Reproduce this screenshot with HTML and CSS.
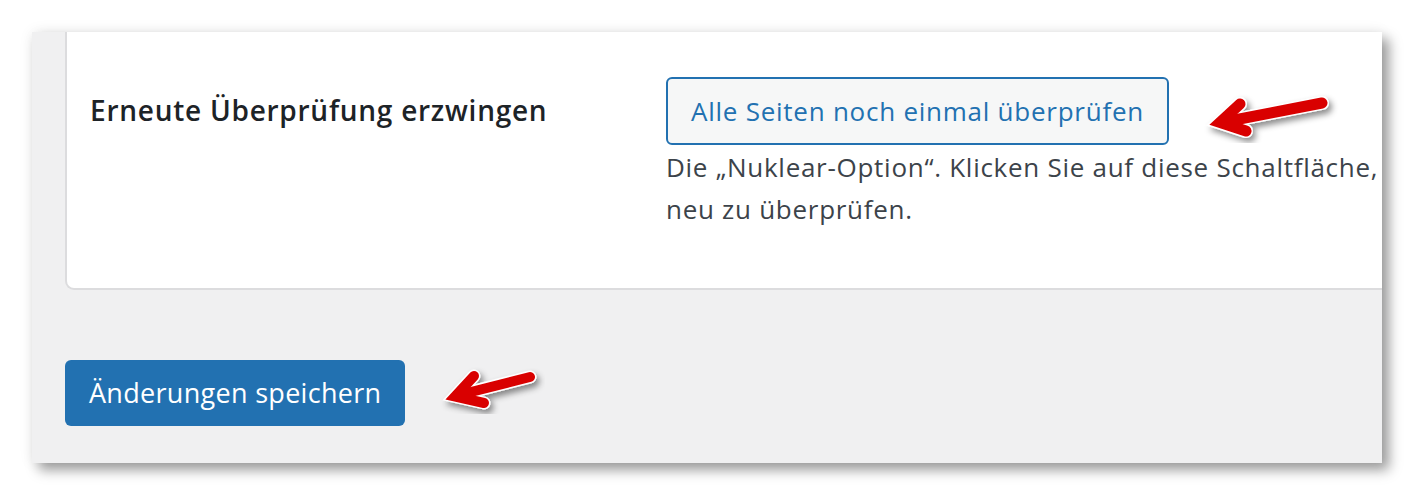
FILE: index.html
```html
<!doctype html>
<html lang="de">
<head>
  <meta charset="utf-8" />
  <meta name="viewport" content="width=device-width, initial-scale=1"/>
  <title>Einstellungen</title>
  <link rel="stylesheet" href="styles.css">
</head>
<body>
  <div class="shot">
    <div class="panel">
      <section class="card">
        <div class="row">
          <div class="label">Erneute Überprüfung erzwingen</div>
          <div class="field">
            <button class="btnSecondary" type="button">Alle Seiten noch einmal überprüfen</button>
            <p class="desc">Die „Nuklear-Option“. Klicken Sie auf diese Schaltfläche, um alle Seiten<br>neu zu überprüfen.</p>
          </div>
        </div>
      </section>
      <div class="actions"><button class="btnPrimary" type="button">Änderungen speichern</button></div>
    </div>
  </div>

  <!-- annotation arrows -->
  <svg class="marks" width="1414" height="496" viewBox="0 0 1414 496" aria-hidden="true">
    <defs>
      <filter id="sh" x="-20%" y="-40%" width="140%" height="180%">
        <feDropShadow dx="3" dy="4" stdDeviation="3" flood-color="#000" flood-opacity=".45"/>
      </filter>
    </defs>
    <g filter="url(#sh)" fill="none" stroke-linecap="round">
      <g stroke="#fff" stroke-width="14">
        <line x1="1322" y1="103" x2="1224" y2="122"/>
        <polyline points="1240,104 1220,122.5 1246,131" stroke-linejoin="miter" stroke-miterlimit="10"/>
      </g>
      <g stroke="#d90000" stroke-width="11">
        <line x1="1322" y1="103" x2="1224" y2="122"/>
        <polyline points="1240,104 1220,122.5 1246,131" stroke-linejoin="miter" stroke-miterlimit="10"/>
      </g>
    </g>
    <g filter="url(#sh)" fill="none" stroke-linecap="round">
      <g stroke="#fff" stroke-width="13">
        <line x1="530" y1="377" x2="459" y2="395"/>
        <polyline points="474,376 455,396.5 484,403" stroke-linejoin="miter" stroke-miterlimit="10"/>
      </g>
      <g stroke="#d90000" stroke-width="10">
        <line x1="530" y1="377" x2="459" y2="395"/>
        <polyline points="474,376 455,396.5 484,403" stroke-linejoin="miter" stroke-miterlimit="10"/>
      </g>
    </g>
  </svg>
</body>
</html>
```

FILE: styles.css
```css
:root{ --panel:#f0f0f1; --fg:#1d2327; --text:#3c434a; --blue:#2271b1; --line:#dcdcde; }
*,*::before,*::after{box-sizing:border-box}
body{margin:0;background:#fff;font-family:"Open Sans","Noto Sans",sans-serif;position:relative;width:1414px;height:496px;overflow:hidden}
.shot{padding:32px}
.panel{width:1350px;height:431px;background:var(--panel);overflow:hidden;padding-left:33px;
  box-shadow:7px 7px 12px rgba(0,0,0,.38),0 0 14px rgba(0,0,0,.07)}
.card{width:1400px;background:#fff;border:2px solid var(--line);border-top:none;border-radius:0 0 0 9px;padding:45px 0 58px 23px}
.row{display:grid;grid-template-columns:576px 1fr;align-items:start}
.label{font-size:28px;font-weight:600;letter-spacing:.75px;color:var(--fg);line-height:40px;margin-top:13px}
.btnSecondary{font:inherit;font-size:26px;letter-spacing:.75px;line-height:36px;color:var(--blue);background:#f6f7f7;border:2px solid var(--blue);border-radius:6px;padding:14px 23px;cursor:pointer}
.desc{margin:1px 0 0;font-size:26px;letter-spacing:.72px;line-height:42px;color:var(--text);white-space:nowrap}
.actions{padding-top:70px}
.btnPrimary{font:inherit;font-size:27px;letter-spacing:.3px;line-height:40px;color:#fff;background:var(--blue);border:none;border-radius:6px;padding:13px 24px;height:66px;cursor:pointer}
.marks{position:absolute;left:0;top:0;pointer-events:none}
```
